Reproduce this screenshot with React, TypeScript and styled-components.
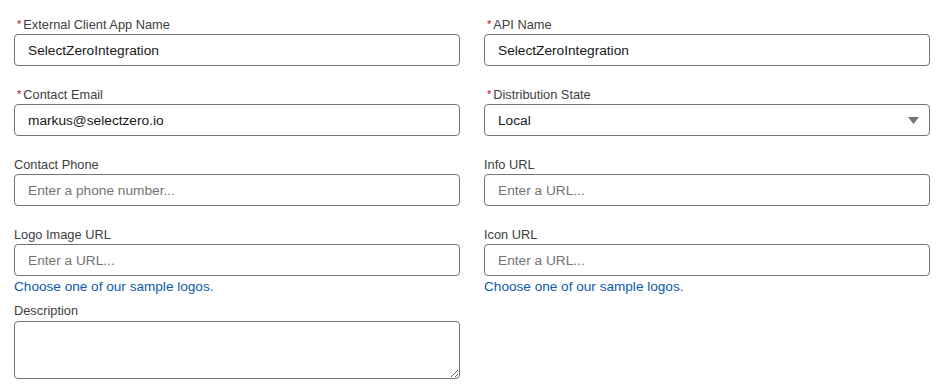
import styled, { createGlobalStyle } from 'styled-components';

const GlobalStyle = createGlobalStyle`
  body {
    margin: 0;
    background: #ffffff;
    font-family: "Liberation Sans", Arial, sans-serif;
    color: #181818;
  }
`;

const Form = styled.div`
  display: grid;
  grid-template-columns: 446px 446px;
  column-gap: 24px;
  row-gap: 20px;
  padding: 16px 14px 0;
  align-items: start;
`;

const Field = styled.div`
  display: flex;
  flex-direction: column;
`;

const Label = styled.label`
  font-size: 12.8px;
  line-height: 18px;
  color: #3e3e3e;
  display: flex;
  align-items: center;
`;

const Required = styled.abbr`
  color: #ba0517;
  text-decoration: none;
  margin: 0 2px 0 3px;
  font-size: 11px;
  position: relative;
  top: -1px;
`;

const Input = styled.input`
  box-sizing: border-box;
  height: 32px;
  width: 100%;
  border: 1px solid #747474;
  border-radius: 4px;
  padding: 0 12px 0 13px;
  font-family: inherit;
  font-size: 13.7px;
  color: #181818;
  background: #fff;
  outline: none;

  &::placeholder {
    color: #747474;
  }
`;

const SelectBox = styled.div`
  box-sizing: border-box;
  height: 32px;
  border: 1px solid #747474;
  border-radius: 4px;
  padding: 0 10px 0 13px;
  display: flex;
  align-items: center;
  justify-content: space-between;
  font-size: 13.7px;
  color: #181818;
`;

const Caret = styled.svg`
  width: 11px;
  height: 7px;
  fill: #747474;
`;

const Link = styled.a`
  color: #0b5cab;
  font-size: 13.6px;
  line-height: 20px;
  margin-top: 1px;
  text-decoration: none;
  cursor: pointer;
`;

const DescriptionField = styled(Field)`
  margin-top: -15px;
`;

const TextArea = styled.textarea`
  box-sizing: border-box;
  height: 58px;
  width: 100%;
  margin-top: 1px;
  border: 1px solid #747474;
  border-radius: 4px;
  padding: 6px 12px;
  font-family: inherit;
  font-size: 14px;
  resize: vertical;
  outline: none;
`;

function FieldLabel({ text, required }: { text: string; required?: boolean }) {
  return (
    <Label>
      {required && <Required title="required">*</Required>}
      {text}
    </Label>
  );
}

export default function App() {
  return (
    <>
      <GlobalStyle />
      <Form>
        <Field>
          <FieldLabel text="External Client App Name" required />
          <Input defaultValue="SelectZeroIntegration" />
        </Field>
        <Field>
          <FieldLabel text="API Name" required />
          <Input defaultValue="SelectZeroIntegration" />
        </Field>

        <Field>
          <FieldLabel text="Contact Email" required />
          <Input defaultValue="markus@selectzero.io" />
        </Field>
        <Field>
          <FieldLabel text="Distribution State" required />
          <SelectBox>
            Local
            <Caret viewBox="0 0 11 7">
              <path d="M0 0h11L5.5 7z" />
            </Caret>
          </SelectBox>
        </Field>

        <Field>
          <FieldLabel text="Contact Phone" />
          <Input placeholder="Enter a phone number..." />
        </Field>
        <Field>
          <FieldLabel text="Info URL" />
          <Input placeholder="Enter a URL..." />
        </Field>

        <Field>
          <FieldLabel text="Logo Image URL" />
          <Input placeholder="Enter a URL..." />
          <Link>Choose one of our sample logos.</Link>
        </Field>
        <Field>
          <FieldLabel text="Icon URL" />
          <Input placeholder="Enter a URL..." />
          <Link>Choose one of our sample logos.</Link>
        </Field>

        <DescriptionField>
          <FieldLabel text="Description" />
          <TextArea />
        </DescriptionField>
      </Form>
    </>
  );
}
